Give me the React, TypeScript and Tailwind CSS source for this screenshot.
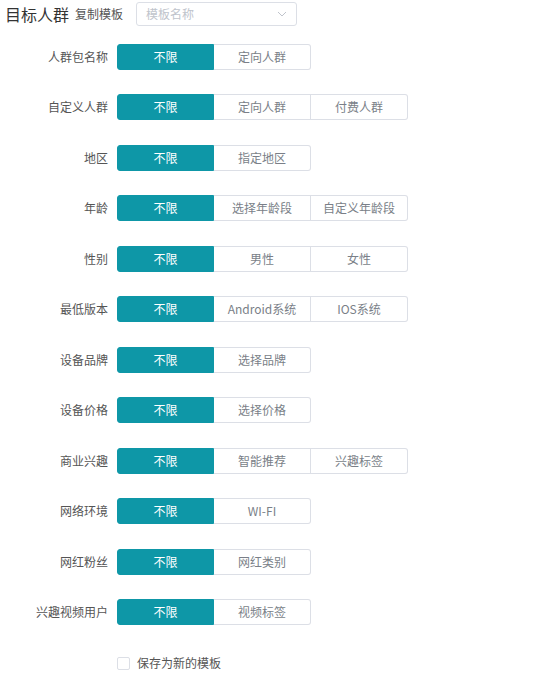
import React, { useState } from 'react';

interface AudienceRow {
  label: string;
  options: string[];
}

const rows: AudienceRow[] = [
  { label: '人群包名称', options: ['不限', '定向人群'] },
  { label: '自定义人群', options: ['不限', '定向人群', '付费人群'] },
  { label: '地区', options: ['不限', '指定地区'] },
  { label: '年龄', options: ['不限', '选择年龄段', '自定义年龄段'] },
  { label: '性别', options: ['不限', '男性', '女性'] },
  { label: '最低版本', options: ['不限', 'Android系统', 'IOS系统'] },
  { label: '设备品牌', options: ['不限', '选择品牌'] },
  { label: '设备价格', options: ['不限', '选择价格'] },
  { label: '商业兴趣', options: ['不限', '智能推荐', '兴趣标签'] },
  { label: '网络环境', options: ['不限', 'WI-FI'] },
  { label: '网红粉丝', options: ['不限', '网红类别'] },
  { label: '兴趣视频用户', options: ['不限', '视频标签'] },
];

function SegmentGroup({ options }: { options: string[] }) {
  const [active, setActive] = useState(0);

  return (
    <div className="flex">
      {options.map((opt, i) => {
        const isActive = i === active;
        const isFirst = i === 0;
        const isLast = i === options.length - 1;
        return (
          <button
            key={opt}
            onClick={() => setActive(i)}
            className={`w-[97px] h-[26px] flex items-center justify-center text-[12px] border-y ${
              isActive
                ? 'bg-[#0e97a7] border-[#0e97a7] text-white'
                : 'bg-white border-[#dcdfe6] text-[#7a7f88]'
            } ${isFirst ? 'rounded-l-[3px] border-l' : ''} ${
              isLast ? 'rounded-r-[3px] border-r' : 'border-r'
            } ${isActive && !isLast ? 'border-r-[#0e97a7]' : ''} ${
              !isActive && !isLast ? 'border-r-[#dcdfe6]' : ''
            }`}
          >
            {opt}
          </button>
        );
      })}
    </div>
  );
}

export default function App() {
  const [saveTemplate, setSaveTemplate] = useState(false);

  return (
    <div
      className="w-[553px] h-[676px] bg-white text-[#555] overflow-hidden"
      style={{ fontFamily: '"Noto Sans CJK SC", "Noto Sans", sans-serif' }}
    >
      {/* Header */}
      <div className="flex items-center pt-[2px] h-[26px] pl-[5px]">
        <span className="text-[16px] text-[#333] leading-none">目标人群</span>
        <span className="ml-[6px] text-[12px] text-[#555]">复制模板</span>
        <div className="ml-[13px] w-[161px] h-[24px] border border-[#dcdfe6] rounded-[3px] flex items-center justify-between pl-[9px] pr-[9px]">
          <span className="text-[12px] text-[#c0c4cc]">模板名称</span>
          <svg width="10" height="6" viewBox="0 0 10 6" fill="none">
            <path d="M1 1l4 4 4-4" stroke="#c0c4cc" strokeWidth="1" />
          </svg>
        </div>
      </div>

      {/* Rows */}
      <div className="mt-[17.5px] flex flex-col gap-[24.5px]">
        {rows.map((row) => (
          <div key={row.label} className="flex items-center h-[26px]">
            <div className="w-[108px] text-right text-[12px] text-[#555]">{row.label}</div>
            <div className="ml-[9px]">
              <SegmentGroup options={row.options} />
            </div>
          </div>
        ))}
      </div>

      {/* Save as template */}
      <label className="mt-[29px] ml-[117px] flex items-center gap-[7px] cursor-pointer w-fit">
        <span
          onClick={() => setSaveTemplate(!saveTemplate)}
          className={`w-[13px] h-[13px] border rounded-[2px] ${
            saveTemplate ? 'bg-[#0e97a7] border-[#0e97a7]' : 'bg-white border-[#dcdfe6]'
          }`}
        />
        <span className="text-[12px] text-[#555]">保存为新的模板</span>
      </label>
    </div>
  );
}
